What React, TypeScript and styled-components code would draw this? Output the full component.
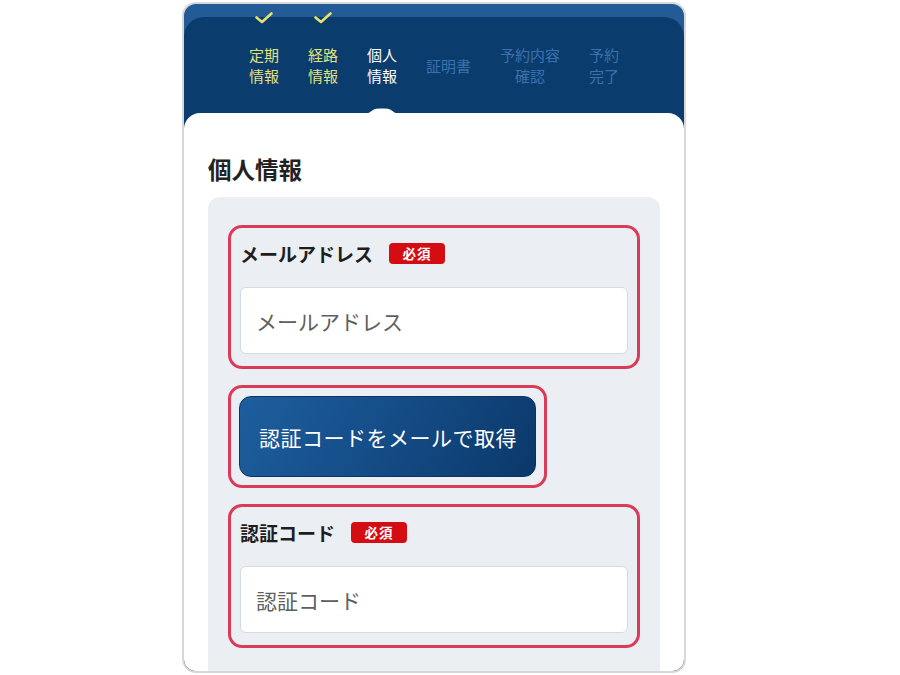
import React from "react";
import styled, { createGlobalStyle } from "styled-components";

const GlobalStyle = createGlobalStyle`
  html, body { margin: 0; padding: 0; background: #ffffff; }
  body { font-family: "Noto Sans CJK JP", "Noto Sans", sans-serif; }
  * { box-sizing: border-box; }
`;

const Page = styled.div`
  width: 900px;
  height: 675px;
  padding: 2px 0 0 182px;
  overflow: hidden;
`;

const Frame = styled.div`
  width: 504px;
  height: 671px;
  border: 2px solid #d7d7d7;
  border-radius: 14px;
  background: #235b96;
  overflow: hidden;
  display: flex;
  flex-direction: column;
`;

const DarkPanel = styled.div`
  margin-top: 13px;
  flex: 1;
  background: #0b3c6e;
  border-radius: 20px 20px 0 0;
  display: flex;
  flex-direction: column;
`;

const Steps = styled.div`
  height: 96px;
  display: flex;
  gap: 29px;
  padding-left: 65px;
`;

type StepState = "done" | "current" | "todo";

const stepColor: Record<StepState, string> = {
  done: "#e4e07a",
  current: "#ffffff",
  todo: "#3b71ab",
};

const StepItem = styled.div<{ $state: StepState }>`
  position: relative;
  display: flex;
  flex-direction: column;
  justify-content: center;
  align-items: center;
  text-align: center;
  font-size: 15px;
  line-height: 21px;
  color: ${(p) => stepColor[p.$state]};
`;

const Check = styled.svg`
  position: absolute;
  top: -6px;
  left: 50%;
  margin-left: -10px;
  width: 20px;
  height: 14px;
`;

const Bump = styled.svg`
  position: absolute;
  bottom: -1px;
  left: 50%;
  margin-left: -18px;
  width: 36px;
  height: 6px;
`;

const Card = styled.div`
  flex: 1;
  background: #ffffff;
  border-radius: 16px 16px 0 0;
  padding: 39px 24px 0 24px;
  display: flex;
  flex-direction: column;
`;

const Title = styled.h1`
  margin: 0 0 11px 0;
  font-size: 23.5px;
  line-height: 34px;
  font-weight: 700;
  color: #222222;
`;

const Panel = styled.div`
  flex: 1;
  background: #ebeff4;
  border-radius: 12px 12px 0 0;
  padding: 28px 20px 0 20px;
  display: flex;
  flex-direction: column;
  align-items: flex-start;
  gap: 16px;
`;

const Highlight = styled.div<{ $full?: boolean }>`
  border: 3px solid #da3b58;
  border-radius: 14px;
  width: ${(p) => (p.$full ? "100%" : "auto")};
`;

const Field = styled.div`
  padding: 12px 9px 12px 9px;
  display: flex;
  flex-direction: column;
  gap: 21px;
`;

const LabelRow = styled.div`
  display: flex;
  align-items: center;
  gap: 16px;
  height: 26px;
`;

const Label = styled.span`
  font-size: 19px;
  font-weight: 700;
  color: #1e1e1e;
`;

const Badge = styled.span`
  display: inline-flex;
  align-items: center;
  justify-content: center;
  width: 56px;
  height: 21px;
  border-radius: 4px;
  background: #d40d12;
  color: #ffffff;
  font-size: 13.5px;
  font-weight: 700;
  letter-spacing: 1px;
`;

const Input = styled.input`
  width: 100%;
  height: 67px;
  border: 1px solid #d3dae3;
  border-radius: 6px;
  background: #ffffff;
  padding: 0 15px;
  font-family: "Noto Sans CJK JP", "Noto Sans", sans-serif;
  font-size: 21px;
  color: #222;
  outline: none;
  &::placeholder {
    color: #5f5f5f;
  }
`;

const ButtonWrap = styled.div`
  padding: 8px;
`;

const PrimaryButton = styled.button`
  width: 297px;
  height: 81px;
  border: 1px solid #0a3461;
  border-radius: 12px;
  background: linear-gradient(120deg, #1e5e9e 0%, #144c86 50%, #0b386a 100%);
  color: #ffffff;
  font-family: "Noto Sans CJK JP", "Noto Sans", sans-serif;
  font-size: 21px;
  letter-spacing: 0.5px;
  text-align: left;
  padding: 0 0 0 19px;
  cursor: pointer;
`;

const steps: { lines: string[]; state: StepState }[] = [
  { lines: ["定期", "情報"], state: "done" },
  { lines: ["経路", "情報"], state: "done" },
  { lines: ["個人", "情報"], state: "current" },
  { lines: ["証明書"], state: "todo" },
  { lines: ["予約内容", "確認"], state: "todo" },
  { lines: ["予約", "完了"], state: "todo" },
];

export default function App() {
  return (
    <>
      <GlobalStyle />
      <Page>
        <Frame>
          <DarkPanel>
            <Steps>
              {steps.map((s, i) => (
                <StepItem key={i} $state={s.state}>
                  {s.state === "done" && (
                    <Check viewBox="0 0 20 14">
                      <path
                        d="M2.5 6.5 L8 11 L17.5 2.5"
                        fill="none"
                        stroke="#e6e16a"
                        strokeWidth="2.6"
                        strokeLinecap="round"
                        strokeLinejoin="round"
                      />
                    </Check>
                  )}
                  {s.lines.map((l, j) => (
                    <span key={j}>{l}</span>
                  ))}
                  {s.state === "current" && (
                    <Bump viewBox="0 0 36 6">
                      <path
                        d="M0 6 C6 6 8 1.5 12 0.8 Q14 0.4 16 0.4 L20 0.4 Q22 0.4 24 0.8 C28 1.5 30 6 36 6 Z"
                        fill="#ffffff"
                      />
                    </Bump>
                  )}
                </StepItem>
              ))}
            </Steps>
            <Card>
              <Title>個人情報</Title>
              <Panel>
                <Highlight $full>
                  <Field>
                    <LabelRow>
                      <Label>メールアドレス</Label>
                      <Badge>必須</Badge>
                    </LabelRow>
                    <Input type="email" placeholder="メールアドレス" />
                  </Field>
                </Highlight>
                <Highlight>
                  <ButtonWrap>
                    <PrimaryButton type="button">認証コードをメールで取得</PrimaryButton>
                  </ButtonWrap>
                </Highlight>
                <Highlight $full>
                  <Field>
                    <LabelRow>
                      <Label>認証コード</Label>
                      <Badge>必須</Badge>
                    </LabelRow>
                    <Input type="text" placeholder="認証コード" />
                  </Field>
                </Highlight>
              </Panel>
            </Card>
          </DarkPanel>
        </Frame>
      </Page>
    </>
  );
}
